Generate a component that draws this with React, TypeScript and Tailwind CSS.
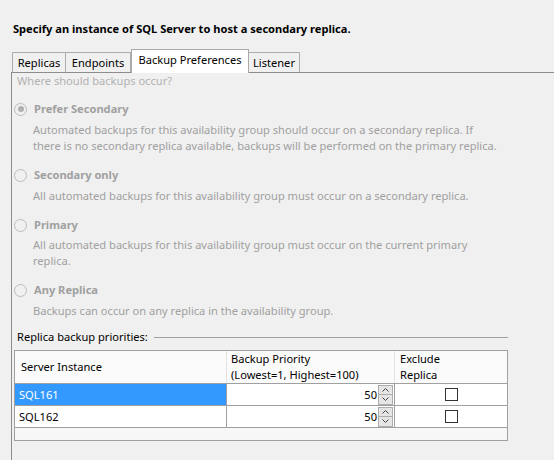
import React from 'react';

const tabs = [
  { label: 'Replicas', w: 'w-[54px]' },
  { label: 'Endpoints', w: 'w-[65px]' },
  { label: 'Backup Preferences', w: 'w-[118px]' },
  { label: 'Listener', w: 'w-[51px]' },
];

const options = [
  {
    label: 'Prefer Secondary',
    checked: true,
    gap: 'mt-[5px]',
    lines: [
      'Automated backups for this availability group should occur on a secondary replica. If',
      'there is no secondary replica available, backups will be performed on the primary replica.',
    ],
  },
  {
    label: 'Secondary only',
    checked: false,
    gap: 'mt-[5px]',
    lines: ['All automated backups for this availability group must occur on a secondary replica.'],
  },
  {
    label: 'Primary',
    checked: false,
    gap: 'mt-[4px]',
    lines: ['All automated backups for this availability group must occur on the current primary', 'replica.'],
  },
  {
    label: 'Any Replica',
    checked: false,
    gap: 'mt-[5px]',
    lines: ['Backups can occur on any replica in the availability group.'],
  },
];

const replicas = [
  { name: 'SQL161', priority: 50, selected: true },
  { name: 'SQL162', priority: 50, selected: false },
];

function Radio({ checked }: { checked: boolean }) {
  return (
    <span className="w-[13px] h-[13px] rounded-full border border-[#bcbcbc] bg-[#f0f0f0] flex items-center justify-center shrink-0">
      {checked && <span className="w-[6px] h-[6px] rounded-full bg-[#b0b0b0]" />}
    </span>
  );
}

function Spinner() {
  return (
    <div className="flex flex-col w-[15px] h-[20px] ml-[1px]">
      {[0, 1].map((i) => (
        <div
          key={i}
          className="flex-1 border border-[#adadad] bg-[#e5e5e5] flex items-center justify-center first:border-b-0"
        >
          <svg width="7" height="4" viewBox="0 0 7 4">
            <path
              d={i === 0 ? 'M0.5 3.5 L3.5 0.5 L6.5 3.5' : 'M0.5 0.5 L3.5 3.5 L6.5 0.5'}
              fill="none"
              stroke="#444"
              strokeWidth="1"
            />
          </svg>
        </div>
      ))}
    </div>
  );
}

export default function App() {
  return (
    <div
      className="w-[554px] h-[460px] bg-[#f0f0f0] overflow-hidden text-[11.1px] leading-[16px] text-black"
      style={{ fontFamily: '"Noto Sans", "Open Sans", sans-serif' }}
    >
      <div className="pt-[21px] pl-[13px] font-bold">Specify an instance of SQL Server to host a secondary replica.</div>

      {/* tab strip */}
      <div className="mt-[12px] pl-[12px] flex items-end h-[23px] relative z-10">
        {tabs.map((t, i) =>
          i === 2 ? (
            <div
              key={t.label}
              className={`${t.w} h-[24px] pt-[2px] text-center bg-white border border-b-0 border-[#a9a9a9] -mb-px`}
            >
              {t.label}
            </div>
          ) : (
            <div
              key={t.label}
              className={`${t.w} h-[20px] pt-[2px] text-center border border-b-0 border-[#adadad] bg-[#f0f0f0] ${
                i === 1 || i === 3 ? 'border-l-0' : ''
              }`}
            >
              {t.label}
            </div>
          )
        )}
      </div>

      {/* tab panel */}
      <div className="ml-[11px] border-l border-t border-[#8d8d8d] h-[400px]">
        <div className="pl-[5px] text-[#b2b2b2]">Where should backups occur?</div>

        <div className="mt-[12px] flex flex-col gap-[13px]">
          {options.map((o) => (
            <div key={o.label}>
              <div className="flex items-center gap-[7px] pl-[2px] h-[16px]">
                <Radio checked={o.checked} />
                <span className="font-bold text-[#a0a0a0]">{o.label}</span>
              </div>
              <div className={`${o.gap} pl-[21px] text-[#a0a0a0]`}>
                {o.lines.map((l) => (
                  <div key={l}>{l}</div>
                ))}
              </div>
            </div>
          ))}
        </div>

        <div className="mt-[10px] pl-[5px] flex items-center gap-[6px] w-[496px]">
          <span>Replica backup priorities:</span>
          <div className="flex-1 border-t border-[#a0a0a0]" />
        </div>

        <div className="mt-[5px] ml-[2px] w-[494px] h-[91px] border border-[#a0a0a0] bg-[#f7f7f7] flex flex-col">
          <div className="grid grid-cols-[212px_168px_1fr] h-[33px] bg-[#fbfbfb] border-b border-[#a0a0a0]">
            <div className="flex items-center pl-[6px] border-r border-[#e3e3e3]">Server Instance</div>
            <div className="flex flex-col justify-center pl-[4px] border-r border-[#e3e3e3]">
              <div>Backup Priority</div>
              <div>(Lowest=1, Highest=100)</div>
            </div>
            <div className="flex flex-col justify-center pl-[5px]">
              <div>Exclude</div>
              <div>Replica</div>
            </div>
          </div>
          {replicas.map((r) => (
            <div key={r.name} className="grid grid-cols-[212px_168px_1fr] h-[22px] border-b border-[#a0a0a0] bg-white">
              <div
                className={`flex items-center pl-[4px] border-r border-[#a0a0a0] ${
                  r.selected ? 'bg-[#3399ff] text-white' : ''
                }`}
              >
                {r.name}
              </div>
              <div className="flex items-center justify-end pr-[1px] border-r border-[#a0a0a0]">
                <span>{r.priority}</span>
                <Spinner />
              </div>
              <div className="flex items-center justify-center">
                <span className="w-[13px] h-[13px] border border-[#333] bg-white" />
              </div>
            </div>
          ))}
        </div>
      </div>
    </div>
  );
}
